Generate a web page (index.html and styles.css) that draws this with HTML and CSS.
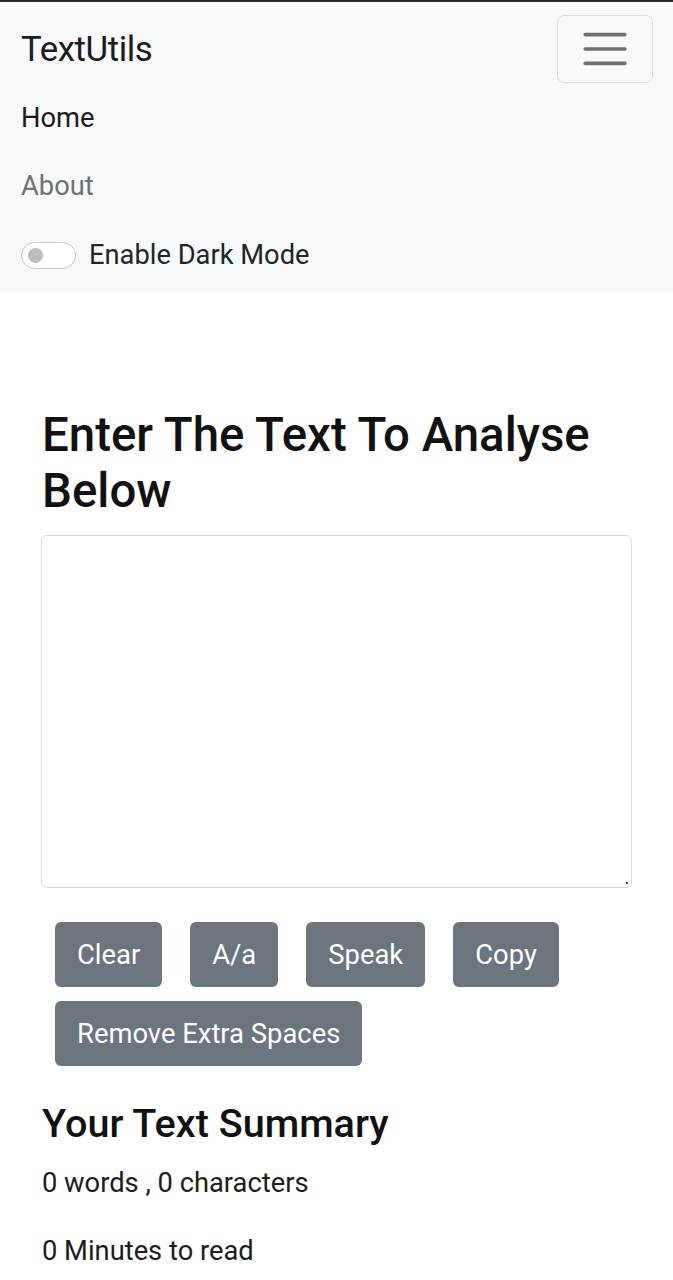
FILE: index.html
```html
<!DOCTYPE html>
<html lang="en">
<head>
<meta charset="utf-8">
<title>TextUtils</title>
<link rel="stylesheet" href="styles.css">
</head>
<body>
<nav class="navbar">
  <div class="nav-top">
    <a class="brand" href="#">TextUtils</a>
    <button class="toggler" type="button" aria-label="Toggle navigation">
      <svg viewBox="0 0 30 30" width="54" height="54" aria-hidden="true">
        <path d="M4 7h22M4 15h22M4 23h22" stroke="#6f6f6f" stroke-width="2" stroke-linecap="round" fill="none"/>
      </svg>
    </button>
  </div>
  <ul class="nav-list">
    <li><a class="nav-link active" href="#">Home</a></li>
    <li><a class="nav-link" href="#">About</a></li>
  </ul>
  <div class="switch-row">
    <span class="switch"><span class="knob"></span></span>
    <label class="switch-label">Enable Dark Mode</label>
  </div>
</nav>

<main class="main">
  <h1 class="title">Enter The Text To Analyse Below</h1>
  <textarea class="text-box" rows="8"></textarea>
  <div class="actions">
    <button class="btn">Clear</button>
    <button class="btn">A/a</button>
    <button class="btn">Speak</button>
    <button class="btn">Copy</button>
    <button class="btn">Remove Extra Spaces</button>
  </div>
  <section class="summary">
    <h2 class="summary-title">Your Text Summary</h2>
    <p class="stat">0 words , 0 characters</p>
    <p class="stat">0 Minutes to read</p>
  </section>
</main>
</body>
</html>
```

FILE: styles.css
```css
* { box-sizing: border-box; }

html, body {
  margin: 0;
  padding: 0;
  background: #ffffff;
}

body {
  font-family: Roboto, "Liberation Sans", sans-serif;
  color: #212529;
  border-top: 2px solid #2b2b2b;
}

a { text-decoration: none; }

.navbar {
  background: #f8f9fa;
  padding: 13px 20px 5px 21px;
  height: 291px;
}

.nav-top {
  display: flex;
  justify-content: space-between;
  align-items: center;
  height: 68px;
}

.brand {
  font-size: 34.8px;
  color: #1c1c1c;
  line-height: 40px;
  letter-spacing: -0.4px;
}

.toggler {
  width: 96px;
  height: 68px;
  border: 1px solid #dcdcdc;
  border-radius: 7px;
  background: transparent;
  display: flex;
  align-items: center;
  justify-content: center;
  padding: 0;
}

.nav-list {
  list-style: none;
  margin: 1px 0 0;
  padding: 0;
}

.nav-link {
  display: block;
  font-size: 27.3px;
  line-height: 42px;
  padding: 13px 0;
  color: #707172;
}

.nav-link.active {
  color: #1a1a1a;
}

.switch-row {
  display: flex;
  align-items: center;
  height: 70px;
  gap: 13px;
}

.switch {
  width: 55px;
  height: 27px;
  border: 1px solid #c6c6c6;
  border-radius: 14px;
  background: #ffffff;
  display: flex;
  align-items: center;
  padding-left: 6px;
}

.knob {
  width: 15px;
  height: 15px;
  border-radius: 50%;
  background: #bdbdbd;
}

.switch-label {
  font-size: 27.3px;
  color: #212529;
}

.main {
  padding: 0 41px 0 41px;
}

.title {
  font-size: 47.4px;
  font-weight: 500;
  line-height: 56px;
  margin: 114px 0 16px;
  color: #111;
  padding-left: 1px;
}

.text-box {
  display: block;
  width: 591px;
  height: 353px;
  border: 1px solid #d8dadd;
  border-radius: 6px;
  font-family: inherit;
  font-size: 28px;
  padding: 6px 21px;
  margin: 0;
  resize: none;
  background: #fff radial-gradient(circle, #444 0, #444 1px, transparent 1.6px) no-repeat right 2px bottom 2px / 4px 4px;
}

.actions {
  display: flex;
  flex-wrap: wrap;
  column-gap: 28px;
  row-gap: 14px;
  padding-left: 14px;
  margin-top: 34px;
}

.btn {
  height: 65px;
  padding: 0 22px;
  font-family: inherit;
  font-size: 27.4px;
  color: #ffffff;
  background: #6c757d;
  border: none;
  border-radius: 6px;
}

.summary {
  padding-left: 1px;
}

.summary-title {
  font-size: 39.6px;
  font-weight: 500;
  line-height: 50px;
  margin: 33px 0 13px;
  color: #111;
}

.stat {
  font-size: 27.3px;
  line-height: 42px;
  margin: 0 0 26px;
  color: #1c1c1c;
}
```
